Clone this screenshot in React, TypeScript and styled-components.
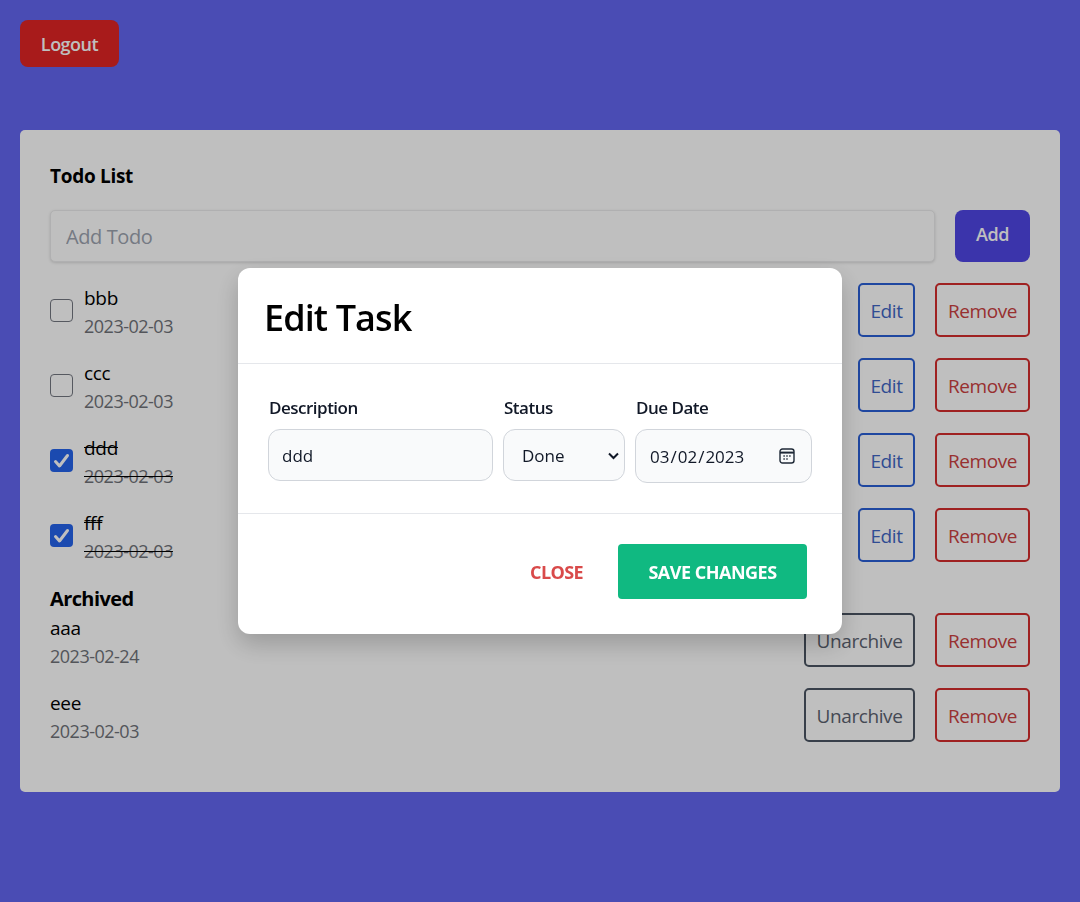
import React from 'react';
import styled, { createGlobalStyle } from 'styled-components';

const todos = [
  { id: 1, name: 'bbb', date: '2023-02-03', done: false },
  { id: 2, name: 'ccc', date: '2023-02-03', done: false },
  { id: 3, name: 'ddd', date: '2023-02-03', done: true },
  { id: 4, name: 'fff', date: '2023-02-03', done: true },
];

const archived = [
  { id: 5, name: 'aaa', date: '2023-02-24' },
  { id: 6, name: 'eee', date: '2023-02-03' },
];

const App = () => {
  return (
    <>
      <GlobalStyle />
      <Page>
        <LogoutButton>Logout</LogoutButton>
        <Card>
          <Title>Todo List</Title>
          <AddRow>
            <AddInput placeholder="Add Todo" />
            <AddButton>Add</AddButton>
          </AddRow>
          <TodoList>
            {todos.map((item) => (
              <TodoRow key={item.id}>
                <Check $checked={item.done}>
                  {item.done && (
                    <svg width="23" height="23" viewBox="0 0 23 23" fill="none">
                      <path d="M5.5 12.5l4 4.5 8-10.5" stroke="#fff" strokeWidth="3" strokeLinecap="round" strokeLinejoin="round" />
                    </svg>
                  )}
                </Check>
                <TodoText>
                  <TodoName $done={item.done}>{item.name}</TodoName>
                  <TodoDate $done={item.done}>{item.date}</TodoDate>
                </TodoText>
                <Actions>
                  <OutlineButton $color="#2a5fd6" $text="#3f66c4" $width={57}>Edit</OutlineButton>
                  <OutlineButton $color="#d42c2c" $text="#cb4040" $width={95}>Remove</OutlineButton>
                </Actions>
              </TodoRow>
            ))}
          </TodoList>
          <ArchivedTitle>Archived</ArchivedTitle>
          <ArchivedList>
            {archived.map((item) => (
              <TodoRow key={item.id}>
                <TodoText>
                  <TodoName>{item.name}</TodoName>
                  <TodoDate>{item.date}</TodoDate>
                </TodoText>
                <Actions>
                  <OutlineButton $color="#4b5563" $text="#5b6270" $width={111}>Unarchive</OutlineButton>
                  <OutlineButton $color="#d42c2c" $text="#cb4040" $width={95}>Remove</OutlineButton>
                </Actions>
              </TodoRow>
            ))}
          </ArchivedList>
        </Card>
      </Page>
      <Overlay>
        <Modal>
          <ModalHeader>
            <ModalTitle>Edit Task</ModalTitle>
          </ModalHeader>
          <ModalBody>
            <Field $width={225}>
              <FieldLabel>Description</FieldLabel>
              <FieldInput defaultValue="ddd" />
            </Field>
            <Field $width={122}>
              <FieldLabel>Status</FieldLabel>
              <FieldWrap>
                <FieldSelect defaultValue="Done">
                  <option>Todo</option>
                  <option>Done</option>
                </FieldSelect>
                <ChevronIcon width="11" height="8" viewBox="0 0 11 8" fill="none">
                  <path d="M1 1.5l4.5 4.5 4.5-4.5" stroke="#111827" strokeWidth="2" />
                </ChevronIcon>
              </FieldWrap>
            </Field>
            <Field $width={177}>
              <FieldLabel>Due Date</FieldLabel>
              <FieldWrap>
                <DateInput type="date" defaultValue="2023-03-02" />
                <CalendarIcon width="16" height="16" viewBox="0 0 16 16" fill="none">
                  <rect x="1" y="1" width="14" height="14" rx="2.5" stroke="#1f2937" strokeWidth="1.4" />
                  <path d="M1 4.6h14" stroke="#1f2937" strokeWidth="2" />
                  <path d="M4.4 8h1.4M7.3 8h1.4M10.2 8h1.4M4.4 11h1.4M7.3 11h1.4" stroke="#1f2937" strokeWidth="1.4" />
                </CalendarIcon>
              </FieldWrap>
            </Field>
          </ModalBody>
          <ModalFooter>
            <CloseButton>Close</CloseButton>
            <SaveButton>Save Changes</SaveButton>
          </ModalFooter>
        </Modal>
      </Overlay>
    </>
  );
};

export default App;

// ========== Styled Components ==========

const fontStack = '"Open Sans", "Noto Sans", sans-serif';

const GlobalStyle = createGlobalStyle`
  * {
    box-sizing: border-box;
  }

  html, body {
    margin: 0;
    padding: 0;
    background: #6366f1;
    font-family: ${fontStack};
  }

  button, input, select {
    font-family: ${fontStack};
  }
`;

const Page = styled.div`
  height: 902px;
  padding: 20px;
  background: #6366f1;
`;

const LogoutButton = styled.button`
  display: block;
  width: 99px;
  height: 47px;
  padding: 0;
  border: none;
  border-radius: 8px;
  background: #e02424;
  color: #fff;
  font-size: 18px;
  font-weight: 600;
  letter-spacing: -0.5px;
`;

const Card = styled.div`
  margin-top: 63px;
  height: 662px;
  padding: 30px;
  border-radius: 5px;
  background: #fff;
`;

const Title = styled.h2`
  margin: 3px 0 21px;
  font-size: 19px;
  line-height: 26px;
  font-weight: 700;
  letter-spacing: -0.3px;
  color: #000;
`;

const AddRow = styled.div`
  display: flex;
  gap: 20px;
  margin-bottom: 21px;
`;

const AddInput = styled.input`
  flex: 1;
  height: 52px;
  padding: 0 15px;
  border: 1px solid #ebebec;
  border-radius: 5px;
  box-shadow: 0 1px 3px rgba(0, 0, 0, 0.15);
  font-size: 20px;
  letter-spacing: -0.4px;

  &::placeholder {
    color: #9ca3af;
    opacity: 1;
  }
`;

const AddButton = styled.button`
  width: 75px;
  height: 52px;
  padding: 0 0 5px;
  border: none;
  border-radius: 8px;
  background: #4f46e5;
  color: #fff;
  font-size: 18px;
  font-weight: 600;
  letter-spacing: -0.5px;
`;

const TodoList = styled.div`
  display: flex;
  flex-direction: column;
  gap: 21px;
`;

const ArchivedList = styled(TodoList)`
  margin-top: 1px;
`;

const TodoRow = styled.div`
  display: flex;
  align-items: center;
  height: 54px;
`;

const Check = styled.span<{ $checked: boolean }>`
  display: flex;
  flex: none;
  width: 23px;
  height: 23px;
  margin-right: 11px;
  border: ${(p) => (p.$checked ? 'none' : '1.5px solid #737780')};
  border-radius: 4px;
  background: ${(p) => (p.$checked ? '#2563eb' : 'transparent')};
`;

const TodoText = styled.div`
  display: flex;
  flex: 1;
  flex-direction: column;
  gap: 3px;
  margin-top: 3px;
`;

const TodoName = styled.span<{ $done?: boolean }>`
  font-size: 19px;
  line-height: 26px;
  letter-spacing: -0.3px;
  color: #000;
  text-decoration: ${(p) => (p.$done ? 'line-through' : 'none')};
`;

const TodoDate = styled.span<{ $done?: boolean }>`
  font-size: 18px;
  line-height: 24px;
  letter-spacing: -0.5px;
  color: #6f7278;
  text-decoration: ${(p) => (p.$done ? 'line-through' : 'none')};
  text-decoration-color: #000;
`;

const Actions = styled.div`
  display: flex;
  gap: 20px;
`;

const OutlineButton = styled.button<{ $color: string; $text: string; $width: number }>`
  width: ${(p) => p.$width}px;
  height: 54px;
  padding: 2px 0 0;
  border: 2px solid ${(p) => p.$color};
  border-radius: 5px;
  background: transparent;
  color: ${(p) => p.$text};
  font-size: 19px;
  letter-spacing: -0.4px;
`;

const ArchivedTitle = styled.h3`
  margin: 24px 0 0;
  font-size: 20px;
  line-height: 26px;
  font-weight: 700;
  letter-spacing: -0.6px;
  color: #000;
`;

const Overlay = styled.div`
  position: fixed;
  inset: 0;
  display: flex;
  align-items: center;
  justify-content: center;
  background: rgba(0, 0, 0, 0.25);
`;

const Modal = styled.div`
  display: flex;
  flex-direction: column;
  width: 604px;
  height: 366px;
  border-radius: 12px;
  background: #fff;
  box-shadow: 0 10px 25px rgba(0, 0, 0, 0.2);
`;

const ModalHeader = styled.div`
  height: 96px;
  padding: 4px 26px 0;
  display: flex;
  align-items: center;
  border-bottom: 1px solid #e5e7eb;
`;

const ModalTitle = styled.h3`
  margin: 0;
  font-size: 36px;
  font-weight: 600;
  letter-spacing: -0.9px;
  color: #000;
`;

const ModalBody = styled.div`
  display: flex;
  align-items: flex-start;
  gap: 10px;
  height: 150px;
  padding: 32px 30px 0;
  border-bottom: 1px solid #e5e7eb;
`;

const Field = styled.div<{ $width: number }>`
  display: flex;
  flex-direction: column;
  width: ${(p) => p.$width}px;
`;

const FieldLabel = styled.label`
  margin: 0 0 9px 1px;
  font-size: 17px;
  line-height: 24px;
  font-weight: 600;
  letter-spacing: -0.5px;
  color: #111827;
`;

const FieldWrap = styled.div`
  position: relative;
`;

const FieldInput = styled.input`
  width: 100%;
  height: 52px;
  padding: 0 13px;
  border: 1px solid #d1d5db;
  border-radius: 12px;
  background: #f9fafb;
  color: #111827;
  font-size: 17px;
`;

const FieldSelect = styled.select`
  display: block;
  width: 100%;
  height: 52px;
  padding: 0 18px;
  border: 1px solid #d1d5db;
  border-radius: 12px;
  background-color: #f9fafb;
  color: #111827;
  font-size: 17px;
  appearance: none;
`;

const ChevronIcon = styled.svg`
  position: absolute;
  top: 23px;
  right: 6px;
  pointer-events: none;
`;

const DateInput = styled.input`
  display: block;
  width: 100%;
  height: 54px;
  padding: 0 13px;
  border: 1px solid #d1d5db;
  border-radius: 12px;
  background: #f9fafb;
  color: #111827;
  font-size: 17px;

  &::-webkit-calendar-picker-indicator {
    opacity: 0;
  }
`;

const CalendarIcon = styled.svg`
  position: absolute;
  top: 19px;
  right: 17px;
  pointer-events: none;
`;

const ModalFooter = styled.div`
  display: flex;
  flex: 1;
  align-items: center;
  justify-content: flex-end;
  padding: 0 35px 6px 0;
`;

const CloseButton = styled.button`
  margin-right: 35px;
  padding: 2px 0 0;
  border: none;
  background: transparent;
  color: #d94a4a;
  font-size: 18px;
  font-weight: 700;
  letter-spacing: -0.6px;
  text-transform: uppercase;
`;

const SaveButton = styled.button`
  width: 189px;
  height: 55px;
  padding: 2px 0 0;
  border: none;
  border-radius: 4px;
  background: #10b981;
  color: #fff;
  font-size: 18px;
  font-weight: 700;
  letter-spacing: -0.5px;
  text-transform: uppercase;
`;
